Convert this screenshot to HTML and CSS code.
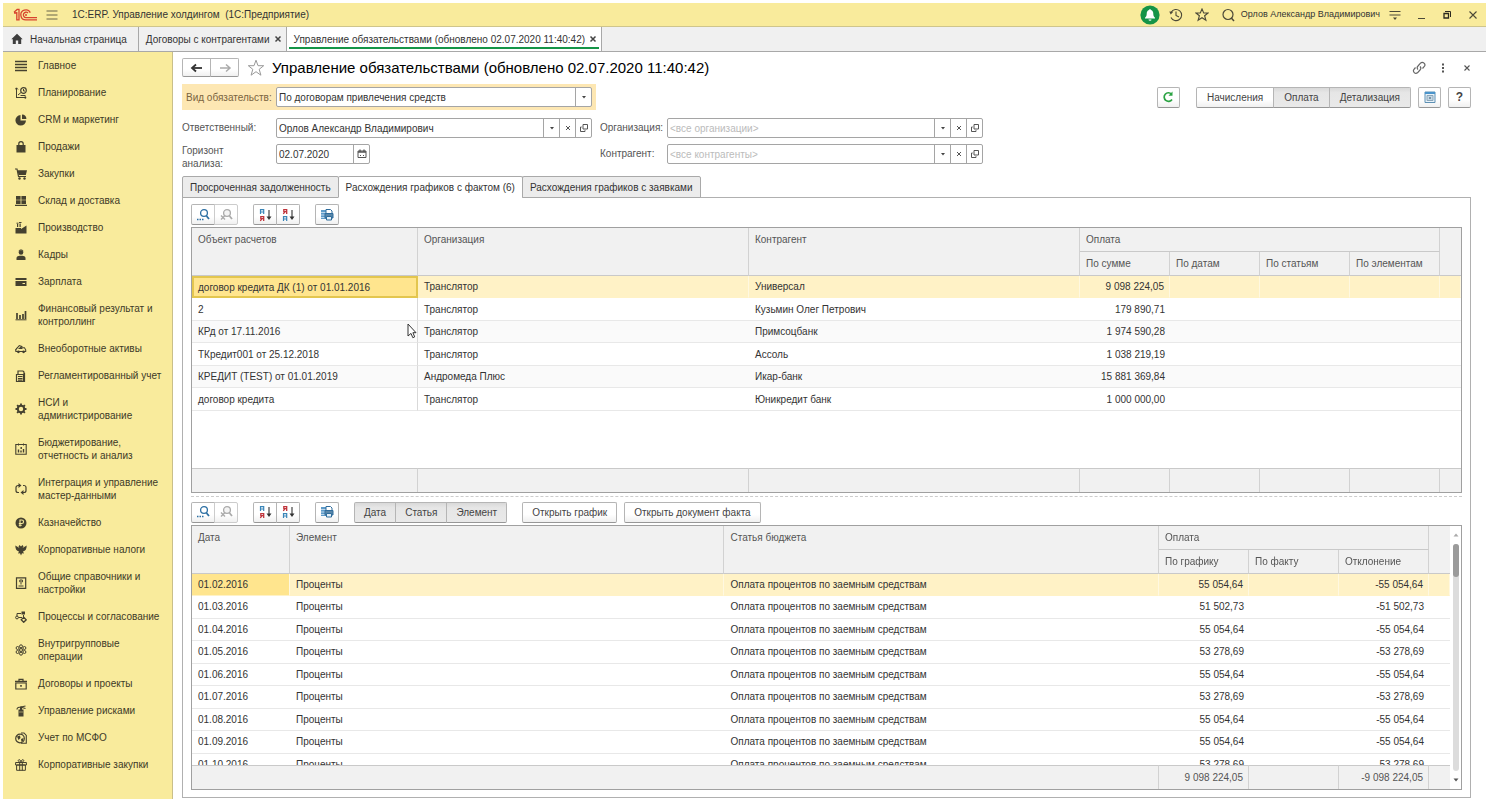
FILE: index.html
```html
<!DOCTYPE html>
<html lang="ru">
<head>
  <meta charset="UTF-8" />
  <meta name="viewport" content="width=device-width, initial-scale=1.0"/>
  <title>1С:ERP. Управление холдингом</title>
  <link rel="stylesheet" href="styles.css">
</head>
<body>

<!-- shared icons -->
<svg class="sprite" aria-hidden="true">
  <symbol id="i-find" viewBox="0 0 16 16">
    <circle cx="9" cy="6" r="3.4" fill="#fff" stroke="#2c6fa3" stroke-width="1.3"/>
    <path d="M11.5 9l2.500 3" stroke="#2c6fa3" stroke-width="1.800"/>
    <path d="M2 12.500h1.500M4.500 12.500h1.500M7 12.500h1.500" stroke="#2c6fa3" stroke-width="1.300"/>
  </symbol>
  <symbol id="i-find-off" viewBox="0 0 16 16">
    <circle cx="9" cy="6" r="3.4" fill="#f4f4f4" stroke="#aaa" stroke-width="1.3"/>
    <path d="M11.5 9l2.500 3" stroke="#aaa" stroke-width="1.800"/>
    <path d="M3 8.500l4 4M7 8.500l-4 4" stroke="#aaa" stroke-width="1.400"/>
  </symbol>
  <symbol id="i-asc" viewBox="0 0 16 16">
    <path d="M3.5 7V2.7h3.2V7M3.5 5h3.2" fill="none" stroke="#3a85b8" stroke-width="1.2"/>
    <path d="M6.7 14V9.6H3.8v2.1h2.9M4.8 11.8L3.3 14" fill="none" stroke="#c0353c" stroke-width="1.3"/>
    <path d="M12 3v8" stroke="#444" stroke-width="1.2"/><path d="M9.5 9.5h5L12 13z" fill="#333"/>
  </symbol>
  <symbol id="i-desc" viewBox="0 0 16 16">
    <path d="M6.7 7V2.6H3.8v2.1h2.9M4.8 4.8L3.3 7" fill="none" stroke="#c0353c" stroke-width="1.3"/>
    <path d="M3.5 14V9.7h3.2V14M3.5 12h3.2" fill="none" stroke="#3a85b8" stroke-width="1.2"/>
    <path d="M12 3v8" stroke="#444" stroke-width="1.2"/><path d="M9.5 9.5h5L12 13z" fill="#333"/>
  </symbol>
  <symbol id="i-print" viewBox="0 0 16 16">
    <path d="M2 3h8v9H2z" fill="#5e9bc9"/>
    <path d="M2 5.5h5M2 8h4M2 10.5h4" stroke="#fff" stroke-width=".6"/>
    <path d="M7 2.5h4.500l1.500 1.500v3H7z" fill="#fff" stroke="#2f6c9c"/>
    <path d="M6 6.500h8v4.500H6z" fill="#5a86a8" stroke="#2f6c9c"/><path d="M7.500 9.500h5v3.500h-5z" fill="#e4f0f8" stroke="#2f6c9c"/>
  </symbol>
  <symbol id="i-down" viewBox="0 0 8 8"><path d="M2 3h4L4 5.5z" fill="#444"/></symbol>
  <symbol id="i-clear" viewBox="0 0 8 8"><path d="M2 2l4 4M6 2L2 6" stroke="#555" stroke-width="1"/></symbol>
  <symbol id="i-open" viewBox="0 0 10 10">
    <path d="M4 1.5h4.5V6H4zM2.7 4H1.5v4.5H6V7.2" fill="none" stroke="#555"/>
  </symbol>
</svg>

<div class="window">
<header class="titlebar">
  <svg class="logo" viewBox="0 0 24 14" role="img" aria-label="1С">
    <g fill="none" stroke="#d8442f" stroke-width="1.3">
      <path d="M1 4.2L4.2 1.4H6v10.4H3.8V4.8L1 5"/>
      <path d="M17.3 4.6A5 5 0 1 0 13 11.9H24"/>
      <path d="M15 5A2.7 2.7 0 1 0 13 9.6H24"/>
    </g>
    <circle cx="13" cy="6.9" r="1" fill="#d8442f"/>
  </svg>
  <button class="icon-btn burger" aria-label="Меню"><svg viewBox="0 0 12 12"><path d="M.5 2h11M.5 6h11M.5 10h11" stroke="#69654a"/></svg></button>
  <span class="app-name">1С:ERP. Управление холдингом&nbsp; (1С:Предприятие)</span>
  <div class="title-tools">
    <button class="icon-btn" aria-label="Уведомления"><svg class="bell" viewBox="0 0 20 20"><circle cx="10" cy="10" r="9.6" fill="#159447"/><path d="M10 4.2c.7 0 1 .4 1 .9 1.7.5 2.3 2 2.3 4 0 1.900.8 2.900 1.700 3.700v.8H5v-.8c.9-.8 1.700-1.800 1.700-3.700 0-2 .6-3.500 2.300-4 0-.5.3-.9 1-.9zM8.500 14.400h3a1.500 1.300 0 0 1-3 0z" fill="#fff"/></svg></button>
    <button class="icon-btn" aria-label="История"><svg viewBox="0 0 14 14"><path d="M2.200 4.200A5.600 5.600 0 1 1 2 9.500" fill="none" stroke="#4c4938" stroke-width="1.100"/><path d="M.3 3.500l4 .2-2.600 2.900z" fill="#4c4938"/><path d="M7 3.500V7.500l3 1.500" fill="none" stroke="#4c4938" stroke-width="1.100"/></svg></button>
    <button class="icon-btn" aria-label="Избранное"><svg viewBox="0 0 14 14"><path d="M7 1l1.700 4h4.300L9.600 7.700l1.300 4.600L7 9.700l-3.900 2.600 1.300-4.600L1 5h4.300z" fill="none" stroke="#4c4938" stroke-width="1.100"/></svg></button>
    <button class="icon-btn" aria-label="Поиск"><svg viewBox="0 0 14 14"><circle cx="7" cy="6.500" r="5" fill="none" stroke="#4c4938" stroke-width="1.200"/><path d="M10.300 10l2.700 3" stroke="#4c4938" stroke-width="1.500"/></svg></button>
    <a class="user" href="#">Орлов Александр Владимирович</a>
    <button class="icon-btn" aria-label="Сервис"><svg viewBox="0 0 14 14"><path d="M1.500 3.500h11M1.500 7h11" stroke="#4c4938"/><path d="M5 9.500h4L7 12z" fill="#4c4938"/></svg></button>
    <button class="icon-btn" aria-label="Свернуть"><svg viewBox="0 0 14 14"><path d="M4 10.500h7" stroke="#4c4938"/></svg></button>
    <button class="icon-btn" aria-label="Восстановить"><svg viewBox="0 0 14 14"><path d="M4 5.500h4.500V10H4z" fill="none" stroke="#2c2a20" stroke-width="1.300"/><path d="M5 3.500h5.500V9" fill="none" stroke="#2c2a20"/></svg></button>
    <button class="icon-btn" aria-label="Закрыть"><svg viewBox="0 0 14 14"><path d="M3.500 3.500l7 7M10.500 3.500l-7 7" stroke="#4c4938" stroke-width="1.100"/></svg></button>
  </div>
</header>

<nav class="page-tabs">
  <a class="page-tab" href="#"><svg class="home" viewBox="0 0 12 12"><path d="M6 .8L.3 6.300h1.500V11h3V7.500h2.400V11h3V6.300h1.500z" fill="#3d3d3d"/></svg>Начальная страница</a>
  <a class="page-tab" href="#">Договоры с контрагентами<svg class="cross" viewBox="0 0 8 8"><path d="M1.500 1.500l5 5M6.500 1.500l-5 5" stroke="#444" stroke-width="1.500"/></svg></a>
  <a class="page-tab active" href="#">Управление обязательствами (обновлено 02.07.2020 11:40:42)<svg class="cross" viewBox="0 0 8 8"><path d="M1.500 1.500l5 5M6.500 1.500l-5 5" stroke="#444" stroke-width="1.500"/></svg></a>
</nav>

<div class="workspace">
<aside class="sidebar">
  <a href="#"><svg viewBox="0 0 12 12"><path d="M0 1.500h12M0 4.500h12M0 7.500h12M0 10.500h12" stroke="#45412f" stroke-width="1.500"/></svg>Главное</a>
  <a href="#"><svg viewBox="0 0 12 12"><path d="M1.500 11V1M0 2.500L1.500.8 3 2.500M1.500 10.500H11M9.500 9l1.700 1.500L9.500 12M3 8l3-2.500" fill="none" stroke="#45412f"/><circle cx="8.500" cy="3.500" r="2.800" fill="none" stroke="#45412f" stroke-width="1.200"/><path d="M8.500 2v2h1.500M5.500 8.500h5" fill="none" stroke="#45412f"/></svg>Планирование</a>
  <a href="#"><svg viewBox="0 0 12 12"><path d="M5.500 1v5.500H11A5.300 5.300 0 1 1 5.500 1z" fill="#45412f"/><path d="M7 .6A4.600 4.600 0 0 1 11.400 5H7z" fill="#45412f"/></svg>CRM и маркетинг</a>
  <a href="#"><svg viewBox="0 0 12 12"><path d="M1.500 4h9v7.500h-9z" fill="#45412f"/><path d="M3.800 6V2.800a2.200 2.200 0 0 1 4.400 0V6" fill="none" stroke="#45412f" stroke-width="1.200"/></svg>Продажи</a>
  <a href="#"><svg viewBox="0 0 12 12"><path d="M0 1h2l1.500 7.500H11" fill="none" stroke="#45412f" stroke-width="1.200"/><path d="M2.500 2.200H12L10.800 7H3.500z" fill="#45412f"/><circle cx="4.500" cy="10.500" r="1.200" fill="#45412f"/><circle cx="9.500" cy="10.500" r="1.200" fill="#45412f"/></svg>Закупки</a>
  <a href="#"><svg viewBox="0 0 12 12"><path d="M1 1h4.600v3.700H1zM6.400 1H11v3.700H6.400zM1 5.300h4.600V9H1zM6.400 5.300H11V9H6.400zM0 9.800h12V11H0z" fill="#45412f"/></svg>Склад и доставка</a>
  <a href="#"><svg viewBox="0 0 12 12"><path d="M.5 11.500V6h5.500v1L11.500 3.500v8zM2 5V2h1.200v3zM4.500 5V1.500h1.200V5z" fill="#45412f"/><path d="M1.500 1.200h2M4 .5h2.500" stroke="#45412f"/></svg>Производство</a>
  <a href="#"><svg viewBox="0 0 12 12"><circle cx="6" cy="3.500" r="2.300" fill="#45412f"/><path d="M1.500 11V9c0-1.500 2-2.300 3-2.300h3c1 0 3 .8 3 2.300v2z" fill="#45412f"/><path d="M3.700 2.200C4.200.5 7.800.5 8.300 2.200" fill="none" stroke="#45412f"/></svg>Кадры</a>
  <a href="#"><svg viewBox="0 0 12 12"><path d="M.5 2h11v2H.5zM.5 5h11v5H.5z" fill="#45412f"/><path d="M7.500 7.500H10" stroke="#f9eb9c"/></svg>Зарплата</a>
  <a href="#"><svg viewBox="0 0 12 12"><path d="M2 4v6M5 6v4M8 5v5M10.500 2v8" stroke="#45412f" stroke-width="1.700"/><path d="M.5 10.800h11" stroke="#45412f"/></svg>Финансовый результат и контроллинг</a>
  <a href="#"><svg viewBox="0 0 14 12"><path d="M1 9V6.500L5 2l3 1-3 2.500h3V4.500h3L12.500 7v2z" fill="none" stroke="#45412f" stroke-width="1.200"/><circle cx="4" cy="9.300" r="1.600" fill="#45412f"/><circle cx="10" cy="9.300" r="1.600" fill="#45412f"/><path d="M0 8l3-4" stroke="#45412f"/></svg>Внеоборотные активы</a>
  <a href="#"><svg viewBox="0 0 12 12"><path d="M1.500 4.500h7v7h-7zM3 4V1h5l1 1v2" fill="none" stroke="#45412f" stroke-width="1.200"/><path d="M9.500 3v9M3 6.500h4.500M3 8.500h4.500M3 10.200h4.500" stroke="#45412f" stroke-width="1.200"/></svg>Регламентированный учет</a>
  <a href="#"><svg viewBox="0 0 12 12"><circle cx="6" cy="6" r="3.200" fill="none" stroke="#45412f" stroke-width="2"/><path d="M6 .5v2M6 9.500v2M.5 6h2M9.500 6h2M2.100 2.100l1.400 1.400M8.500 8.500l1.400 1.400M9.900 2.100L8.500 3.500M3.500 8.500l-1.400 1.400" stroke="#45412f" stroke-width="1.800"/></svg>НСИ и администрирование</a>
  <a href="#"><svg viewBox="0 0 12 12"><path d="M.8 1.500h10.400v9.700H.8z" fill="none" stroke="#45412f" stroke-width="1.100"/><path d="M3.500 9.500v-3M6 9.500v-2M6.200 6V4M8.500 9.500V6" stroke="#45412f" stroke-width="1.400"/><path d="M3.500.5v2M8.500.5v2" stroke="#45412f"/></svg>Бюджетирование, отчетность и анализ</a>
  <a href="#"><svg viewBox="0 0 12 12"><path d="M4.500 2.500H3a2 2 0 0 0-2 2v3a2 2 0 0 0 2 2h1M7.500 9.500H9a2 2 0 0 0 2-2v-3a2 2 0 0 0-2-2H8" fill="none" stroke="#45412f" stroke-width="1.200"/><path d="M3.500 0v5l3-2.500zM8.500 7v5l-3-2.500z" fill="#45412f"/></svg>Интеграция и управление мастер-данными</a>
  <a href="#"><svg viewBox="0 0 12 12"><circle cx="6" cy="6" r="5.500" fill="#45412f"/><path d="M5 9.500V3h1.800a1.700 1.700 0 0 1 0 3.500H3.800M3.800 8.200h3" fill="none" stroke="#f9eb9c" stroke-width="1.100"/></svg>Казначейство</a>
  <a href="#"><svg viewBox="0 0 12 12"><path d="M6 2.500L4.500 1 3.500 2.500 4.500 4 .3 1.500C.3 5 1.500 7 4 7.500L3 9.500l2-.3L6 11.500l1-2.300 2 .3-1-2C10.500 7 11.700 5 11.700 1.500L7.500 4l1-1.500L7.500 1z" fill="#45412f"/></svg>Корпоративные налоги</a>
  <a href="#"><svg viewBox="0 0 12 12"><path d="M1.500.8h9.200v10.500H1.500z" fill="none" stroke="#45412f" stroke-width="1.200"/><path d="M4.800 3h2.600v2H4.800zM3.500 9h5M6 6v1.500" fill="none" stroke="#45412f"/></svg>Общие справочники и настройки</a>
  <a href="#"><svg viewBox="0 0 12 12"><path d="M6.500.5H10v3H6.500z" fill="#45412f"/><circle cx="2" cy="6.500" r="1.400" fill="none" stroke="#45412f"/><path d="M2 5V2.500h4M3.500 6.500H7M8.500 4v2.500" fill="none" stroke="#45412f"/><path d="M8.700 6.300l2.500 2.500-2.500 2.500-2.500-2.500z" fill="none" stroke="#45412f" stroke-width="1.300"/></svg>Процессы и согласование</a>
  <a href="#"><svg viewBox="0 0 12 12"><g fill="none" stroke="#45412f"><circle cx="6" cy="6" r="1.500"/><circle cx="6" cy="2.300" r="1.500"/><circle cx="6" cy="9.700" r="1.500"/><circle cx="2.600" cy="4" r="1.500"/><circle cx="9.400" cy="4" r="1.500"/><circle cx="2.600" cy="8" r="1.500"/><circle cx="9.400" cy="8" r="1.500"/></g></svg>Внутригрупповые операции</a>
  <a href="#"><svg viewBox="0 0 12 12"><path d="M.8 5h10.400v6H.8zM4 3V1.300h4V3" fill="none" stroke="#45412f" stroke-width="1.200"/><path d="M0 3.500h12M6 7v1.800" stroke="#45412f" stroke-width="1.600"/></svg>Договоры и проекты</a>
  <a href="#"><svg viewBox="0 0 12 12"><path d="M3.500 4.500h5v7h-5zM5 1.500h2v3H5z" fill="#45412f"/><path d="M2 4.500C2 2.500 4 2 6 2l4.500-1M7 2.500l3.500 1" fill="none" stroke="#45412f" stroke-width="1.200"/><path d="M4 7h4" stroke="#f9eb9c" stroke-width=".5"/></svg>Управление рисками</a>
  <a href="#"><svg viewBox="0 0 12 12"><path d="M6 1h3l2.300 2.500v7.800H6" fill="none" stroke="#45412f" stroke-width="1.100"/><circle cx="5" cy="6.500" r="4.300" fill="none" stroke="#45412f" stroke-width="1.200"/><path d="M2 4.500l3-1 .5 2.500L3.500 8zM6 7l2.500-1-.5 3-1.500 1z" fill="#45412f"/></svg>Учет по МСФО</a>
  <a href="#"><svg viewBox="0 0 12 12"><path d="M.6 3.500h10.800V6H.6zM1.600 6h8.800v5.300H1.600zM4.700 3.500v8M7.300 3.500v8M6 3.300C3 3.300 2.500.7 4.200.7 5.500.7 6 2.500 6 3.300 6 2.500 6.500.7 7.800.7 9.500.7 9 3.300 6 3.300z" fill="none" stroke="#45412f"/></svg>Корпоративные закупки</a>
</aside>

<main class="content">
  <div class="form-title">
    <div class="btn-group">
      <button class="btn nav-btn" aria-label="Назад"><svg viewBox="0 0 14 10"><path d="M2 5h10" stroke="#333" stroke-width="1.800"/><path d="M6 1.500L2 5l4 3.500" fill="none" stroke="#333" stroke-width="1.800"/></svg></button>
      <button class="btn nav-btn" aria-label="Вперед"><svg viewBox="0 0 14 10"><path d="M2 5h10M8 1.500L12 5 8 8.500" fill="none" stroke="#aaa" stroke-width="1.500"/></svg></button>
    </div>
    <svg class="fav" viewBox="0 0 18 18"><path d="M9 1.200l2 5.500h5.700l-4.500 3.600 1.700 5.900L9 12.700l-4.900 3.500 1.700-5.900L1.300 6.700H7z" fill="none" stroke="#999"/></svg>
    <h1>Управление обязательствами (обновлено 02.07.2020 11:40:42)</h1>
    <div class="form-tools">
      <button class="icon-btn" aria-label="Ссылка"><svg viewBox="0 0 14 14"><g fill="none" stroke="#666" stroke-width="1.200"><path d="M6 8.500a2.500 2.500 0 0 1 0-3.500l2.500-2.800a2.500 2.500 0 0 1 3.600 3.500L10.500 7.500"/><path d="M8 5.500A2.500 2.500 0 0 1 8 9l-2.500 2.800A2.500 2.500 0 0 1 2 8.300L3.500 6.500"/></g></svg></button>
      <button class="icon-btn" aria-label="Еще"><svg viewBox="0 0 14 14"><path d="M6 2.500h2v2H6zM6 6h2v2H6zM6 9.500h2v2H6z" fill="#555"/></svg></button>
      <button class="icon-btn" aria-label="Закрыть форму"><svg viewBox="0 0 14 14"><path d="M4.500 4.500l5 5M9.500 4.500l-5 5" stroke="#555" stroke-width="1.100"/></svg></button>
    </div>
  </div>

  <div class="command-row">
    <div class="kind">
      <label for="kind">Вид обязательств:</label>
      <div class="combo">
        <input id="kind" type="text" value="По договорам привлечения средств">
        <button aria-label="Выбрать вид"><svg><use href="#i-down"/></svg></button>
      </div>
    </div>
    <div class="commands">
      <button class="btn square" aria-label="Обновить"><svg viewBox="0 0 14 14"><path d="M11 9.500A4.300 4.300 0 1 1 10.500 4" fill="none" stroke="#2ba343" stroke-width="1.700"/><path d="M11.500 1.500v4.200H7.500z" fill="#2ba343"/></svg></button>
      <div class="btn-group">
        <button class="btn">Начисления</button>
        <button class="btn pressed">Оплата</button>
        <button class="btn pressed">Детализация</button>
      </div>
      <button class="btn square" aria-label="Настройки"><svg viewBox="0 0 14 14"><path d="M2 2h10v10.500H2z" fill="#e9f2f8" stroke="#5d90b4"/><path d="M2 3h10" stroke="#4a94cb" stroke-width="2"/><path d="M4 5.500h6v5H4z" fill="#c5d7e3" stroke="#8aa6ba"/><circle cx="7" cy="8" r="1" fill="#5c7c94"/></svg></button>
      <button class="btn square help">?</button>
    </div>
  </div>

  <div class="filters">
    <label for="resp">Ответственный:</label>
    <div class="combo">
      <input id="resp" type="text" value="Орлов Александр Владимирович">
      <button aria-label="Список"><svg><use href="#i-down"/></svg></button>
      <button aria-label="Очистить"><svg><use href="#i-clear"/></svg></button>
      <button aria-label="Открыть"><svg class="open"><use href="#i-open"/></svg></button>
    </div>
    <label for="org">Организация:</label>
    <div class="combo">
      <input id="org" type="text" placeholder="&lt;все организации&gt;">
      <button aria-label="Список"><svg><use href="#i-down"/></svg></button>
      <button aria-label="Очистить"><svg><use href="#i-clear"/></svg></button>
      <button aria-label="Открыть"><svg class="open"><use href="#i-open"/></svg></button>
    </div>
    <label for="horizon" class="two-line">Горизонт анализа:</label>
    <div class="combo date">
      <input id="horizon" type="text" value="02.07.2020">
      <button aria-label="Календарь"><svg class="open" viewBox="0 0 10 10"><path d="M1 2h8v6.500H1z" fill="none" stroke="#555"/><path d="M1 3h8M3 .5v2M7 .5v2" stroke="#555" stroke-width="1.300"/><path d="M3 6.500h1M6 6.500h1" stroke="#555"/></svg></button>
    </div>
    <label for="partner">Контрагент:</label>
    <div class="combo">
      <input id="partner" type="text" placeholder="&lt;все контрагенты&gt;">
      <button aria-label="Список"><svg><use href="#i-down"/></svg></button>
      <button aria-label="Очистить"><svg><use href="#i-clear"/></svg></button>
      <button aria-label="Открыть"><svg class="open"><use href="#i-open"/></svg></button>
    </div>
  </div>

  <div class="tabs" role="tablist">
    <button role="tab">Просроченная задолженность</button>
    <button role="tab" class="active" aria-selected="true">Расхождения графиков с фактом (6)</button>
    <button role="tab">Расхождения графиков с заявками</button>
  </div>

  <section class="panel">
    <div class="toolbar">
      <div class="btn-group">
        <button class="btn tool" aria-label="Найти"><svg><use href="#i-find"/></svg></button>
        <button class="btn tool off" aria-label="Отменить поиск"><svg><use href="#i-find-off"/></svg></button>
      </div>
      <div class="btn-group">
        <button class="btn tool" aria-label="По возрастанию"><svg><use href="#i-asc"/></svg></button>
        <button class="btn tool" aria-label="По убыванию"><svg><use href="#i-desc"/></svg></button>
      </div>
      <button class="btn tool" aria-label="Вывести список"><svg><use href="#i-print"/></svg></button>
    </div>

    <div class="grid">
      <div class="grid-view">
      <table class="contracts">
        <colgroup><col class="c-object"><col><col><col class="c-sum"><col class="c-sum"><col class="c-sum"><col class="c-sum"><col class="c-end"></colgroup>
        <thead>
          <tr><th rowspan="2">Объект расчетов</th><th rowspan="2">Организация</th><th rowspan="2">Контрагент</th><th colspan="4">Оплата</th><th rowspan="2"></th></tr>
          <tr><th>По сумме</th><th>По датам</th><th>По статьям</th><th>По элементам</th></tr>
        </thead>
        <tbody>
          <tr class="selected"><td class="current">договор кредита ДК (1) от 01.01.2016</td><td>Транслятор</td><td>Универсал</td><td class="num">9 098 224,05</td><td></td><td></td><td></td><td></td></tr>
          <tr><td>2</td><td>Транслятор</td><td>Кузьмин Олег Петрович</td><td class="num">179 890,71</td><td></td><td></td><td></td><td></td></tr>
          <tr><td>КРд от 17.11.2016</td><td>Транслятор</td><td>Примсоцбанк</td><td class="num">1 974 590,28</td><td></td><td></td><td></td><td></td></tr>
          <tr><td>ТКредит001 от 25.12.2018</td><td>Транслятор</td><td>Ассоль</td><td class="num">1 038 219,19</td><td></td><td></td><td></td><td></td></tr>
          <tr><td>КРЕДИТ (TEST) от 01.01.2019</td><td>Андромеда Плюс</td><td>Икар-банк</td><td class="num">15 881 369,84</td><td></td><td></td><td></td><td></td></tr>
          <tr><td>договор кредита</td><td>Транслятор</td><td>Юникредит банк</td><td class="num">1 000 000,00</td><td></td><td></td><td></td><td></td></tr>
          <tr class="filler"><td colspan="8"></td></tr>
        </tbody>
        <tfoot>
          <tr><td></td><td></td><td></td><td></td><td></td><td></td><td></td><td></td></tr>
        </tfoot>
      </table>
      <svg class="cursor" viewBox="0 0 10 16"><path d="M1 1v12l3-2.600 1.800 4.300 1.900-.8-1.800-4.200H9z" fill="#fff" stroke="#333"/></svg>
      </div>
    </div>

    <div class="splitter"></div>

    <div class="toolbar">
      <div class="btn-group">
        <button class="btn tool" aria-label="Найти"><svg><use href="#i-find"/></svg></button>
        <button class="btn tool off" aria-label="Отменить поиск"><svg><use href="#i-find-off"/></svg></button>
      </div>
      <div class="btn-group">
        <button class="btn tool" aria-label="По возрастанию"><svg><use href="#i-asc"/></svg></button>
        <button class="btn tool" aria-label="По убыванию"><svg><use href="#i-desc"/></svg></button>
      </div>
      <button class="btn tool" aria-label="Вывести список"><svg><use href="#i-print"/></svg></button>
      <div class="btn-group">
        <button class="btn pressed">Дата</button>
        <button class="btn pressed">Статья</button>
        <button class="btn pressed">Элемент</button>
      </div>
      <div class="actions">
        <button class="btn">Открыть график</button>
        <button class="btn">Открыть документ факта</button>
      </div>
    </div>

    <div class="grid">
      <div class="grid-view">
      <table class="schedule">
        <colgroup><col class="c-date"><col><col><col class="c-sum"><col class="c-sum"><col class="c-sum"><col class="c-end"></colgroup>
        <thead>
          <tr><th rowspan="2">Дата</th><th rowspan="2">Элемент</th><th rowspan="2">Статья бюджета</th><th colspan="3">Оплата</th><th rowspan="2"></th></tr>
          <tr><th>По графику</th><th>По факту</th><th>Отклонение</th></tr>
        </thead>
        <tbody>
          <tr class="selected"><td class="current">01.02.2016</td><td>Проценты</td><td>Оплата процентов по заемным средствам</td><td class="num">55 054,64</td><td></td><td class="num">-55 054,64</td><td></td></tr>
          <tr><td>01.03.2016</td><td>Проценты</td><td>Оплата процентов по заемным средствам</td><td class="num">51 502,73</td><td></td><td class="num">-51 502,73</td><td></td></tr>
          <tr><td>01.04.2016</td><td>Проценты</td><td>Оплата процентов по заемным средствам</td><td class="num">55 054,64</td><td></td><td class="num">-55 054,64</td><td></td></tr>
          <tr><td>01.05.2016</td><td>Проценты</td><td>Оплата процентов по заемным средствам</td><td class="num">53 278,69</td><td></td><td class="num">-53 278,69</td><td></td></tr>
          <tr><td>01.06.2016</td><td>Проценты</td><td>Оплата процентов по заемным средствам</td><td class="num">55 054,64</td><td></td><td class="num">-55 054,64</td><td></td></tr>
          <tr><td>01.07.2016</td><td>Проценты</td><td>Оплата процентов по заемным средствам</td><td class="num">53 278,69</td><td></td><td class="num">-53 278,69</td><td></td></tr>
          <tr><td>01.08.2016</td><td>Проценты</td><td>Оплата процентов по заемным средствам</td><td class="num">55 054,64</td><td></td><td class="num">-55 054,64</td><td></td></tr>
          <tr><td>01.09.2016</td><td>Проценты</td><td>Оплата процентов по заемным средствам</td><td class="num">55 054,64</td><td></td><td class="num">-55 054,64</td><td></td></tr>
          <tr><td>01.10.2016</td><td>Проценты</td><td>Оплата процентов по заемным средствам</td><td class="num">53 278,69</td><td></td><td class="num">-53 278,69</td><td></td></tr>
        </tbody>
        <tfoot>
          <tr><td></td><td></td><td></td><td class="num">9 098 224,05</td><td></td><td class="num">-9 098 224,05</td><td></td></tr>
        </tfoot>
      </table>
      </div>
      <div class="scrollbar">
        <svg viewBox="0 0 8 8"><path d="M1.500 5.500h5L4 2.500z" fill="#aaa"/></svg>
        <div class="track"><div class="thumb"></div></div>
        <svg viewBox="0 0 8 8"><path d="M1.500 2.500h5L4 5.500z" fill="#555"/></svg>
      </div>
    </div>
  </section>
</main>
</div>
</div>

</body>
</html>
```

FILE: styles.css
```css
* {
  box-sizing: border-box;
}

body {
  margin: 0;
  background: #fff;
  color: #333;
  font-family: "Liberation Sans", Arial, sans-serif;
  font-size: 10px;
  line-height: 13px;
}

a {
  color: inherit;
  text-decoration: none;
}

button, input {
  font: inherit;
  color: inherit;
  margin: 0;
}

svg {
  display: block;
  flex: none;
}

.sprite {
  position: absolute;
  width: 0;
  height: 0;
}

.window {
  display: flex;
  flex-direction: column;
  height: 100vh;
  padding: 3px 3px 0;
}

/* top bar */
.titlebar {
  display: flex;
  align-items: center;
  height: 24px;
  padding-left: 10px;
  background: #f9eb9c;
  border-bottom: 1px solid #cfc58c;
}

.logo {
  width: 24px;
  height: 14px;
}

.icon-btn {
  display: flex;
  align-items: center;
  justify-content: center;
  width: 26px;
  height: 20px;
  padding: 0;
  border: 0;
  background: none;
}

.icon-btn svg {
  width: 14px;
  height: 14px;
}

.icon-btn .bell {
  width: 20px;
  height: 20px;
}

.burger {
  width: 30px;
}

.burger svg {
  width: 12px;
  height: 12px;
}

.app-name {
  padding-left: 5px;
}

.title-tools {
  display: flex;
  align-items: center;
  margin-left: auto;
}

.user {
  padding-right: 2px;
  font-size: 9px;
}

/* open pages */
.page-tabs {
  display: flex;
  height: 25px;
  background: #f0f0f0;
  border-bottom: 1px solid #a8a8a8;
}

.page-tab {
  display: flex;
  align-items: center;
  padding: 0 4px 0 7px;
  border-right: 1px solid #a8a8a8;
}

.page-tab .home {
  width: 12px;
  height: 12px;
  margin: 0 7px 0 1px;
}

.page-tab:first-child {
  padding-right: 11px;
}

.page-tab .cross {
  width: 8px;
  height: 8px;
  margin-left: 4px;
}

.page-tab.active {
  background: linear-gradient(#159447, #159447) center 20px / calc(100% - 4px) 2px no-repeat #fff;
}

.workspace {
  display: flex;
  flex: 1;
  min-height: 0;
}

/* sections */
.sidebar {
  width: 170px;
  flex: none;
  overflow: hidden;
  background: #f9eb9c;
  border-right: 1px solid #c9bf8a;
}

.sidebar a {
  display: flex;
  align-items: center;
  gap: 11px;
  padding: 7px 9px 7px 12px;
  color: #3d3a28;
}

.sidebar svg {
  width: 12px;
  height: 12px;
}

/* form */
.content {
  display: flex;
  flex-direction: column;
  flex: 1;
  min-width: 0;
  padding: 6px 15px 1px 9px;
}

.form-title {
  display: flex;
  align-items: center;
  height: 19px;
  margin-bottom: 7px;
}

h1 {
  margin: 0;
  font-size: 15px;
  font-weight: normal;
  line-height: 18px;
  color: #000;
}

.fav {
  width: 18px;
  height: 18px;
  margin: 0 7px 0 8px;
}

.form-tools {
  display: flex;
  margin-left: auto;
  margin-right: -8px;
}

.form-tools .icon-btn {
  width: 24px;
}

.btn {
  display: flex;
  align-items: center;
  justify-content: center;
  height: 21px;
  padding: 0 9px;
  background: linear-gradient(#fff 60%, #f0f0f0);
  border: 1px solid #b5b5b5;
  border-bottom-color: #979797;
  border-radius: 2px;
  color: #444;
  white-space: nowrap;
}

.btn-group {
  display: flex;
}

.btn-group .btn + .btn {
  margin-left: -1px;
  border-top-left-radius: 0;
  border-bottom-left-radius: 0;
}

.btn-group .btn:not(:last-child) {
  border-top-right-radius: 0;
  border-bottom-right-radius: 0;
}

.btn.pressed {
  background: linear-gradient(#d9d9d9, #e6e6e6 25%, #e9e9e9);
}

.nav-btn {
  width: 29px;
  height: 19px;
  padding: 0;
}

.nav-btn svg {
  width: 14px;
  height: 10px;
}

.square {
  width: 23px;
  padding: 0;
}

.square svg {
  width: 14px;
  height: 14px;
}

.help {
  font-size: 12px;
  font-weight: bold;
}

.command-row {
  display: flex;
  align-items: center;
  justify-content: space-between;
  margin-bottom: 8px;
}

.kind {
  display: flex;
  align-items: center;
  height: 26px;
  padding: 0 4px;
  background: #fde7b3;
}

.kind label {
  width: 90px;
  color: #7a6440;
}

.commands {
  display: flex;
  gap: 7px;
}

.commands .btn-group {
  margin-left: 9px;
}

.commands .btn-group .btn {
  padding: 0 10px;
}

.filters {
  display: grid;
  grid-template-columns: 94px 316px 75px 316px;
  grid-template-rows: 20px 26px;
  row-gap: 6px;
  margin-bottom: 6px;
  color: #555;
}

.filters > label {
  line-height: 20px;
}

.filters > label:nth-of-type(even) {
  padding-left: 8px;
}

.filters .two-line {
  width: 60px;
  line-height: 13px;
}

.combo {
  display: flex;
  width: 316px;
  height: 20px;
  background: #fff;
  border: 1px solid #a5a5a5;
  border-radius: 2px;
  color: #333;
}

.combo.date {
  width: 94px;
}

.combo input {
  flex: 1;
  min-width: 0;
  padding: 0 2px;
  border: 0;
  background: none;
  outline: none;
}

.combo input::placeholder {
  color: #bbb;
  opacity: 1;
}

.combo button {
  display: flex;
  align-items: center;
  justify-content: center;
  width: 16px;
  padding: 0;
  border: 0;
  border-left: 1px solid #a5a5a5;
  background: none;
}

.combo svg {
  width: 8px;
  height: 8px;
}

.combo .open {
  width: 10px;
  height: 10px;
}

.tabs {
  display: flex;
  position: relative;
  margin-bottom: -1px;
}

.tabs button {
  height: 22px;
  padding: 0 7px;
  background: #ececec;
  border: 1px solid #a9a9a9;
  margin-right: -1px;
  border-radius: 2px 2px 0 0;
}

.tabs .active {
  background: #fff;
  border-bottom-color: #fff;
}

.panel {
  display: flex;
  flex-direction: column;
  flex: 1;
  min-height: 0;
  padding: 6px 8px 7px;
  border: 1px solid #b0b0b0;
}

.toolbar {
  display: flex;
  gap: 15px;
  margin-bottom: 2px;
}

.tool {
  width: 24px;
  padding: 0;
}

.toolbar .tool {
  padding: 0;
}

.tool svg {
  width: 16px;
  height: 16px;
}

.tool.off {
  border-color: #ccc;
}

.actions {
  display: flex;
  gap: 7px;
}

.splitter {
  height: 4px;
  margin: 3px 0 2px;
  border-top: 1px dashed #ccc;
}

/* tables */
.grid {
  display: flex;
  flex: 1;
  min-height: 0;
  border: 1px solid #a0a0a0;
}

.grid-view {
  position: relative;
  flex: 1;
  min-width: 0;
  overflow: hidden;
}

table {
  width: 100%;
  height: 100%;
  table-layout: fixed;
  border-collapse: separate;
  border-spacing: 0;
}

.c-object {
  width: 226px;
}

.c-date {
  width: 98px;
}

.c-sum {
  width: 90px;
}

.c-end {
  width: 21px;
}

th, td {
  padding: 0 6px;
  text-align: left;
  white-space: nowrap;
  overflow: hidden;
}

th {
  height: 24px;
  padding-top: 5px;
  background: #f1f1f1;
  border-right: 1px solid #d2d2d2;
  border-bottom: 1px solid #c9c9c9;
  color: #555;
  font-weight: normal;
  vertical-align: top;
}

thead {
  position: sticky;
  top: 0;
}

tr:first-child th:last-child {
  border-right: 0;
}

tbody td {
  height: 22px;
  border-bottom: 1px solid #e8e8e8;
}

tbody tr:nth-child(even) td {
  height: 23px;
}

.contracts tbody tr:nth-child(odd) td {
  background: #fafafa;
}

.contracts tbody td:first-child {
  border-right: 1px solid #d9d9d9;
}

tbody tr.selected td,
.contracts tbody tr.selected td {
  background: #fff2c6;
  border-right: 1px solid #fff8e0;
  border-bottom-color: #fff2c6;
}

tbody tr.selected td.current {
  background: #ffe58e;
}

.contracts tbody tr.selected td.current {
  background: #ffe58e;
  border: 2px solid #e3c64f;
  padding: 0 4px;
}

.contracts tbody tr.filler td {
  height: auto;
  background: #fff;
  border: 0;
}

td.num {
  padding-right: 5px;
  text-align: right;
}

tfoot {
  position: sticky;
  bottom: 0;
}

tfoot td {
  height: 24px;
  background: #f1f1f1;
  border-top: 1px solid #c9c9c9;
  border-right: 1px solid #d2d2d2;
  color: #555;
}

.schedule tfoot td:nth-child(-n+2) {
  border-right: 0;
}

tfoot td:last-child {
  border-right: 0;
}

.cursor {
  position: absolute;
  left: 215px;
  top: 95px;
  width: 10px;
  height: 16px;
}

.scrollbar {
  display: flex;
  flex-direction: column;
  align-items: center;
  width: 11px;
  padding: 5px 0;
}

.scrollbar svg {
  width: 8px;
  height: 8px;
}

.track {
  flex: 1;
  width: 6px;
  margin: 5px 0;
  background: #dcdcdc;
  border-radius: 3px;
}

.thumb {
  height: 33px;
  background: #9b9b9b;
  border-radius: 3px;
}
```
